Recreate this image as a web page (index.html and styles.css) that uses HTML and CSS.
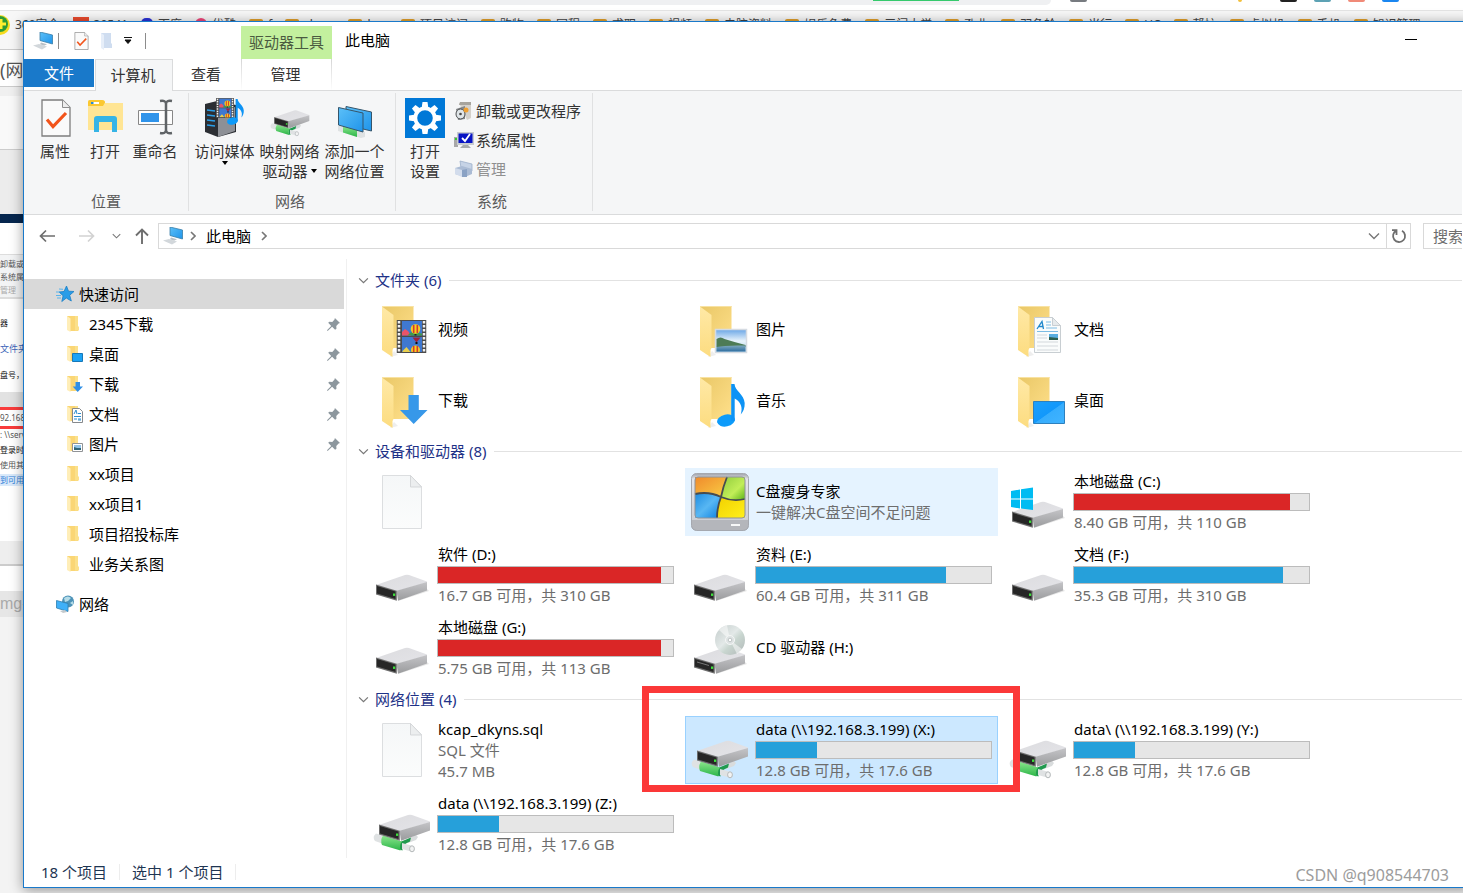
FILE: index.html
```html
<!DOCTYPE html>
<html lang="zh-CN">
<head>
<meta charset="utf-8">
<title>此电脑</title>
<link rel="stylesheet" href="styles.css">
</head>
<body>
<svg class="defs" aria-hidden="true">
  <defs>
    <linearGradient id="gBack" x1="0" y1="0" x2="1" y2="1"><stop offset="0" stop-color="#e9c766"/><stop offset="1" stop-color="#ffe08b"/></linearGradient>
    <linearGradient id="gFlap" x1="0" y1="0" x2="0" y2="1"><stop offset="0" stop-color="#ffe9a6"/><stop offset="1" stop-color="#fcdc80"/></linearGradient>
    <linearGradient id="gTop" x1="0" y1="0" x2="1" y2="1"><stop offset="0" stop-color="#dcdcdf"/><stop offset="1" stop-color="#e4e4e8"/></linearGradient>
    <linearGradient id="gSide" x1="0" y1="0" x2="0" y2="1"><stop offset="0" stop-color="#c4c4c7"/><stop offset="1" stop-color="#9a9b9d"/></linearGradient>
    <linearGradient id="gBlue" x1="0" y1="0" x2="1" y2="1"><stop offset="0" stop-color="#5cc0f8"/><stop offset="1" stop-color="#1f94ea"/></linearGradient>
    <linearGradient id="gDesk" x1="0" y1="0" x2="1" y2="1"><stop offset="0" stop-color="#1ba0fb"/><stop offset=".5" stop-color="#1298fb"/><stop offset=".52" stop-color="#36adfd"/><stop offset="1" stop-color="#41b4ff"/></linearGradient>
    <linearGradient id="gSky" x1="0" y1="0" x2="0" y2="1"><stop offset="0" stop-color="#6aa6e6"/><stop offset=".5" stop-color="#e8f3fb"/><stop offset="1" stop-color="#a9cfe8"/></linearGradient>
    <linearGradient id="gSea" x1="0" y1="0" x2="0" y2="1"><stop offset="0" stop-color="#7fa9bd"/><stop offset="1" stop-color="#2f6ea0"/></linearGradient>
    <linearGradient id="gPipe" x1="0" y1="0" x2="0" y2="1"><stop offset="0" stop-color="#8be68c"/><stop offset="1" stop-color="#2cb548"/></linearGradient>
    <linearGradient id="gDisc" x1="0" y1="0" x2="1" y2="1"><stop offset="0" stop-color="#c3cccb"/><stop offset=".45" stop-color="#e3e9e8"/><stop offset=".6" stop-color="#c9d6d0"/><stop offset="1" stop-color="#b0b7b7"/></linearGradient>
    <linearGradient id="gCase" x1="0" y1="0" x2="0" y2="1"><stop offset="0" stop-color="#9fa2aa"/><stop offset=".1" stop-color="#e3e4e9"/><stop offset=".8" stop-color="#cfd1d6"/><stop offset="1" stop-color="#8e9199"/></linearGradient>
    <linearGradient id="gOr" x1="0" y1="0" x2="1" y2="1"><stop offset="0" stop-color="#f08a2c"/><stop offset="1" stop-color="#f9cf45"/></linearGradient>
    <linearGradient id="gGr" x1="0" y1="0" x2="1" y2="1"><stop offset="0" stop-color="#8fcc3c"/><stop offset=".6" stop-color="#c2ee58"/><stop offset="1" stop-color="#5bb318"/></linearGradient>
    <linearGradient id="gBl" x1="0" y1="0" x2="1" y2="1"><stop offset="0" stop-color="#1d8be0"/><stop offset=".5" stop-color="#58b7f3"/><stop offset="1" stop-color="#0a7fe0"/></linearGradient>
    <linearGradient id="gYe" x1="0" y1="0" x2="1" y2="1"><stop offset="0" stop-color="#f1d000"/><stop offset="1" stop-color="#fff01a"/></linearGradient>
    <linearGradient id="gPage" x1="0" y1="0" x2="0" y2="1"><stop offset="0" stop-color="#f5f7f8"/><stop offset="1" stop-color="#fbfcfc"/></linearGradient>
  </defs>

  <symbol id="folder" viewBox="0 0 58 58">
    <path d="M17 56l8-2-4-4z" fill="#eee"/>
    <path d="M9 5h31.500v42H20z" fill="url(#gBack)"/>
    <path d="M9 5.500h31.500" stroke="#f8e2a2"/>
    <path d="M9 5.500L20.500 14v33l-1 2v7L9 49z" fill="url(#gFlap)"/>
  </symbol>
  <symbol id="drive" viewBox="0 0 58 58">
    <path d="M25 55l31-10-3-3z" fill="#e6e6e6"/>
    <path d="M3 39l29-10q2-.6 4 0l18 6.500v1L24 45z" fill="url(#gTop)"/>
    <path d="M23.500 44.700L54 36v8.500L25 54.700z" fill="url(#gSide)"/>
    <path d="M3 38.500l20.800 6.200v10L3 48.500z" fill="#6d6d6d"/>
    <path d="M4 40l18.500 5.500v7.500L4 47.500z" fill="#262626"/>
    <path d="M20 47.500h2.200v2.400H20z" fill="#3ee23c"/>
  </symbol>
  <symbol id="netdrive" viewBox="0 0 58 58">
    <path d="M34 44l9-4 2 2-2 3-8 3z" fill="#d9dcdd"/>
    <path d="M27 47l11-4.500-1 4-4 2q-4 2-3.500 7l-3-1z" fill="#209a4e"/>
    <path d="M3 38.500l7 2-1 8-7-2.500q-3-4 1-7.500z" fill="#dfe2e3"/>
    <path d="M29 48l11 3q3 3 0 6l-11-3z" fill="#dfe2e3"/>
    <ellipse cx="39" cy="53.800" rx="2.400" ry="3" fill="#f2f3f3" stroke="#b5b9ba"/>
    <path d="M10 40.500l19 6q-3 3-1.500 9L9 50Q7 45 10 40.500z" fill="url(#gPipe)"/>
    <g transform="translate(3 -9)">
      <path d="M3 39l29-10q2-.6 4 0l18 6.500v1L24 45z" fill="url(#gTop)"/>
      <path d="M23.500 44.700L54 36v8.500L25 54.700z" fill="url(#gSide)"/>
      <path d="M3 38.500l20.800 6.200v10L3 48.500z" fill="#6d6d6d"/>
      <path d="M4 40l18.500 5.500v7.500L4 47.500z" fill="#262626"/>
      <path d="M20 47.500h2.200v2.400H20z" fill="#3ee23c"/>
    </g>
  </symbol>
  <symbol id="blank" viewBox="0 0 58 58">
    <path d="M9.500 2.500h28l11 11v42h-39z" fill="url(#gPage)" stroke="#dcdee0"/>
    <path d="M37.500 2.500v11.500h11z" fill="#eceeef" stroke="#d5d7d9"/>
  </symbol>
  <symbol id="film" viewBox="0 0 30 33">
    <path d="M0 0h30v33H0z" fill="#4b4b4b"/>
    <path d="M2.500 1v32M27.500 1v32" stroke="#f0f0f0" stroke-width="2.500" stroke-dasharray="2.400 1.600"/>
    <path d="M5.500 1h20v14.500h-20zM5.500 17h20v15h-20z" fill="#3f78d0"/>
    <path d="M5.500 12l3-3 3 2 3 4.500h-9z" fill="#ea5468"/><path d="M11 15.500l3-3 11.500 1v2z" fill="#3f9a4a"/>
    <circle cx="19" cy="9" r="4.800" fill="#f4cf22"/><path d="M17.200 5v8M20.800 5v8" stroke="#d83a2a" stroke-width="1.600"/><path d="M18 14h2v1.500h-2z" fill="#222"/>
    <path d="M16 17.500h8l-4 5z" fill="#a22338"/><path d="M19 22h2v2h-2z" fill="#111"/>
    <circle cx="19" cy="30" r="4.500" fill="#f4cf22"/><path d="M17.200 26v6M20.800 26v6" stroke="#d83a2a" stroke-width="1.600"/>
    <path d="M6 31l4-4 4 5H6z" fill="#e9cf4d"/><path d="M5.500 32h20v1h-20z" fill="#4b4b4b"/>
  </symbol>
  <symbol id="note" viewBox="0 0 28 43">
    <ellipse cx="9" cy="36.500" rx="9" ry="6" transform="rotate(-12 9 36.500)" fill="#0d9bfa"/>
    <path d="M14.200 0h3.300c.5 7 9.500 10 10.200 19 .2 5-1.500 9-4 11.500 2-6 1-12-6-16V37h-3.500z" fill="#0d93f5"/>
  </symbol>
  <symbol id="pc" viewBox="0 0 20 18">
    <path d="M7 0l12.500 3v9L7 8.500z" fill="url(#gBlue)" stroke="#3a7fa8" stroke-width=".8"/>
    <path d="M8 10.500l6 1.800-3 1.500-4-1.500z" fill="#b9c0c6"/>
    <path d="M0 13.500l6-1.500 8 2.500-5 3z" fill="#d2d7db"/>
  </symbol>
  <symbol id="miniFolder" viewBox="0 0 18 18">
    <path d="M1 1h11v15H4z" fill="#fad675"/><path d="M9 1h3v10l1 1v3.500H9z" fill="#fbe08a"/>
    <path d="M1 1l3.500 2.500V17L1 15z" fill="#ffeeb8"/>
  </symbol>
  <symbol id="chev" viewBox="0 0 12 8"><path d="M1 1.500l5 5 5-5" fill="none" stroke="currentColor" stroke-width="1.400"/></symbol>
  <symbol id="pin" viewBox="0 0 14 14"><path d="M8.500 0L14 5.500l-1.500.5-2.500 2.500.2 3-1.500 1.200L5.500 9.500.7 14 0 13.300l4.500-4.800L1.300 5.200 2.500 4l3.200.2 2.400-2.600z" fill="#8d979e"/></symbol>
  <symbol id="checkpage" viewBox="0 0 30 38">
    <path d="M1 1h20.500L29 8.500V37H1z" fill="#fafafa" stroke="#7d7d7d" stroke-width="1.300"/><path d="M21.500 1v7.500H29" fill="#ededed" stroke="#8d8d8d"/>
    <path d="M6 20.500l6 7L25 14" fill="none" stroke="#f2541b" stroke-width="3.200"/>
  </symbol>
</svg>

<div class="browser">
  <div class="urlbar"><span class="pill"><i class="green"></i></span><i class="dot"></i><i class="dot y"></i><i class="dot k"></i><i class="dot t"></i><i class="dot r"></i><i class="dot b"></i></div>
  <div class="bookmarks">
    <svg class="b360" viewBox="0 0 20 20"><circle cx="10" cy="10" r="10" fill="#f5dc1e"/><circle cx="10" cy="9" r="8" fill="#2d9b35"/><path d="M11 4v10M6 9h10" stroke="#ffee2e" stroke-width="3"/></svg>
    <span class="first">360安全</span><i class="red"></i><span>30541</span><i class="paw"></i><span>百度</span><i class="pink"></i><span>优酷</span>
    <i class="fold"></i><span>f</span><i class="fold"></i><span>share</span><i class="fold"></i><span>hsp</span><i class="fold"></i><span>项目访问</span><i class="fold"></i><span>购物</span><i class="fold"></i><span>同程</span><i class="fold"></i><span>求职</span><i class="fold"></i><span>视频</span><i class="fold"></i><span>电脑资料</span><i class="fold"></i><span>娱乐免费</span><i class="fold"></i><span>三门大学</span><i class="fold"></i><span>孔业</span><i class="fold"></i><span>羽角轮</span><i class="fold"></i><span>当行</span><i class="fold"></i><span>UC</span><i class="fold"></i><span>帮忙</span><i class="fold"></i><span>虚拟机</span><i class="fold"></i><span>手机</span><i class="fold"></i><span>知识管理</span>
  </div>
  <div class="page">
    <div class="p-tab">(网</div>
    <div class="p-tool"></div>
    <div class="p-grey"></div>
    <div class="p-navy"></div>
    <div class="p-white"></div>
    <div class="p-rib"><span>卸载或更</span><span>系统属性</span><span class="dim">管理</span></div>
    <div class="p-text"><span class="bold">器</span><span class="link">文件夹</span><span class="bold">盘号，以</span></div>
    <div class="p-band"></div>
    <div class="p-red">92.168.3</div>
    <div class="p-list"><span>: \\serve</span><span class="bold">登录时重新</span><span>使用其他</span><span class="sky">到可用于</span></div>
    <div class="p-box"></div>
    <div class="p-gap"></div>
    <div class="p-img">mg-</div>
    <div class="p-rest"></div>
  </div>
</div>

<main class="window">
  <header class="titlebar">
    <div class="qat">
      <svg class="i-pc"><use href="#pc"/></svg><i class="bar"></i>
      <svg class="i-chk"><use href="#checkpage"/></svg>
      <svg class="i-ghost" viewBox="0 0 13 18"><path d="M1 1h10v10l1 1v4H1z" fill="#cfddf0"/><path d="M1 1l3 2v15l-3-2z" fill="#e6eef9"/></svg>
      <svg class="i-drop" viewBox="0 0 8 7"><path d="M0 .5h8M1 3h6L4 6.500z" stroke="#111" stroke-width="1" fill="#111"/></svg><i class="bar last"></i>
    </div>
    <div class="ctx">驱动器工具</div>
    <h1>此电脑</h1>
    <button class="min" aria-label="最小化"><i></i></button>
  </header>

  <nav class="tabs">
    <button class="file">文件</button><button class="active">计算机</button><button class="view">查看</button><button class="manage">管理</button>
  </nav>

  <section class="ribbon">
    <div class="group g1">
      <div class="tools">
        <button class="big"><svg viewBox="0 0 40 40"><use href="#checkpage" x="6" y="1" width="30" height="38"/></svg>属性</button>
        <button class="big"><svg viewBox="0 0 40 40"><path d="M3 4q0-2 2-2h12q3 0 3 3H38v27H3z" fill="#ffe594"/><path d="M3 8V4q0-2 2-2h12q3 0 3 2.500L18 8z" fill="#fbc831"/><path d="M6 4h8v2H6z" fill="#fff"/><path d="M6 4h2.500v2H6z" fill="#2a8bd6"/><path d="M9 34V21q0-3 3-3h17q3 0 3 3v13h-5V24H14v10z" fill="#35b4e6"/></svg>打开</button>
        <button class="big"><svg viewBox="0 0 40 40"><path d="M3.500 12.500h34v14h-34z" fill="#fdfdfd" stroke="#878787"/><path d="M6 15h18v9H6z" fill="#2e93ea"/><path d="M25 3q6-1 6 3 0-4 6-3M31 5v29M25 35q6 1 6-3 0 4 6 3" fill="none" stroke="#5f6366" stroke-width="2.500"/></svg>重命名</button>
      </div>
      <h2>位置</h2>
    </div>
    <div class="group g2">
      <div class="tools">
        <button class="big"><svg viewBox="0 0 40 40"><path d="M0 6l12-3 19 4v27l-18 5L0 34z" fill="#2b2e33"/><path d="M13 12l17-3v24l-17 6z" fill="#8d9096"/><path d="M2 12l8 1M2 17l8 1M2 22l8 1M2 27l8 1" stroke="#2b9fe8" stroke-width="1.300"/><use href="#film" x="11" y="0" width="18" height="20"/><use href="#note" x="22" y="1" width="17" height="26"/></svg>访问媒体<svg class="tri" viewBox="0 0 6 4"><path d="M0 0h6L3 4z"/></svg></button>
        <button class="big"><svg viewBox="0 2 58 58"><use href="#netdrive" x="0" y="0" width="58" height="58"/></svg>映射网络<span class="row">驱动器<svg class="tri" viewBox="0 0 6 4"><path d="M0 0h6L3 4z"/></svg></span></button>
        <button class="big"><svg viewBox="0 0 40 40"><path d="M3 28l4-1 23 7v5l-4 1L3 33z" fill="#dfe2e3"/><path d="M8 28l14 4v7L8 34.500z" fill="url(#gPipe)"/><path d="M11 8.500L36.500 14v19L11 27z" fill="url(#gBlue)" stroke="#35556b"/><path d="M3.500 9.500L28 15v19L3.500 27z" fill="url(#gBlue)" stroke="#35556b"/></svg>添加一个<br>网络位置</button>
      </div>
      <h2>网络</h2>
    </div>
    <div class="group g3">
      <div class="tools">
        <button class="big"><svg viewBox="0 0 40 40"><path d="M0 0h40v40H0z" fill="#0078d7"/><g fill="#fff"><path id="t" d="M17.500 4h5l1 7h-7z"/><use href="#t" transform="rotate(45 20 20)"/><use href="#t" transform="rotate(90 20 20)"/><use href="#t" transform="rotate(135 20 20)"/><use href="#t" transform="rotate(180 20 20)"/><use href="#t" transform="rotate(225 20 20)"/><use href="#t" transform="rotate(270 20 20)"/><use href="#t" transform="rotate(315 20 20)"/></g><circle cx="20" cy="20" r="9.700" fill="none" stroke="#fff" stroke-width="3.800"/></svg>打开<br>设置</button>
        <div class="small">
          <button><svg viewBox="0 0 20 20"><path d="M5 2l10-1 2 2v14l-4 2z" fill="#d4d1cb"/><path d="M6 1h11v3H5z" fill="#a7a49d"/><path d="M2 8l9-3v13l-7 1z" fill="#85888a"/><ellipse cx="6.500" cy="13" rx="4.500" ry="5" fill="#dfe5e8" stroke="#4d5052"/><circle cx="6.500" cy="13" r="1.300" fill="#444"/><circle cx="12" cy="9" r="2.500" fill="#f0a030"/></svg>卸载或更改程序</button>
          <button><svg viewBox="0 0 20 20"><path d="M0 7h4v10H0z" fill="#a8a8a8"/><path d="M1 8h2v2H1z" fill="#32c832"/><path d="M3 2h17v13H3z" fill="#c8ccd0"/><path d="M4.500 3.500h14v9.500h-14z" fill="#0814c4"/><path d="M8 8l3 3 5-7" fill="none" stroke="#fff" stroke-width="1.800"/><path d="M9 15h5l3 3H6z" fill="#a6aaad"/></svg>系统属性</button>
          <button disabled><svg viewBox="0 0 20 20"><path d="M6 2l12 3v7L7 9z" fill="#c6d3e6" stroke="#9db0ca" stroke-width=".8"/><path d="M1 9l7-2 10 3v5l-7 3-10-3z" fill="#aabbd4"/><path d="M1 9l7 2v7l-7-3z" fill="#d2dcec"/><path d="M8 11l5-1v8H8z" fill="#8aa2c4"/></svg>管理</button>
        </div>
      </div>
      <h2>系统</h2>
    </div>
  </section>

  <div class="address">
    <button class="back" aria-label="后退"><svg class="arr" viewBox="0 0 16 14"><path d="M7 1.500L1.500 7 7 12.500M1.500 7H16" fill="none" stroke="#6e6e6e" stroke-width="1.700"/></svg></button>
    <button class="fwd" aria-label="前进" disabled><svg class="arr" viewBox="0 0 16 14"><path d="M9 1.500L14.500 7 9 12.500M14.500 7H0" fill="none" stroke="#d2d2d2" stroke-width="1.700"/></svg></button>
    <button class="recent" aria-label="最近"><svg class="cv"><use href="#chev"/></svg></button>
    <button class="up" aria-label="上移"><svg class="upa" viewBox="0 0 14 16"><path d="M1 7.500L7 1.500l6 6M7 1.500V16" fill="none" stroke="#6e6e6e" stroke-width="1.900"/></svg></button>
    <div class="crumbs">
      <svg class="i-pc"><use href="#pc"/></svg><svg class="gt" viewBox="0 0 6 10"><path d="M1 1l4 4-4 4" fill="none" stroke="#777" stroke-width="1.600"/></svg>
      <a href="#here">此电脑</a><svg class="gt" viewBox="0 0 6 10"><path d="M1 1l4 4-4 4" fill="none" stroke="#777" stroke-width="1.600"/></svg>
      <svg class="cv end"><use href="#chev"/></svg>
      <button class="reload" aria-label="刷新"><svg viewBox="0 0 16 16"><path d="M5.500 2.600A6 6 0 1 0 11 2.800M5.500 7V2.200H1" fill="none" stroke="#6e6e6e" stroke-width="1.800"/></svg></button>
    </div>
    <input class="search" type="text" placeholder="搜索" aria-label="搜索">
  </div>

  <div class="body">
    <nav class="side">
      <a href="#q" class="root sel"><svg viewBox="0 0 18 18"><path d="M10.500 1l2 5.200 5.500.3-4.300 3.700 1.600 5.800-5-3-4.500 3.500 1.300-5.800L3 7l5-.5z" fill="#2a9de8" stroke="#1b7fc6" stroke-width=".8"/><path d="M3 4l4 .3M0 7h4M0 10.500h5M1 13h4" stroke="#5ab4ec"/></svg>快速访问</a>
      <a href="#1"><svg><use href="#miniFolder"/></svg>2345下载<svg class="pin"><use href="#pin"/></svg></a>
      <a href="#2"><svg viewBox="0 0 18 18"><use href="#miniFolder"/><path d="M6.500 8.500h10v8h-10z" fill="#1ba3f5" stroke="#1778b8"/></svg>桌面<svg class="pin"><use href="#pin"/></svg></a>
      <a href="#3"><svg viewBox="0 0 18 18"><use href="#miniFolder"/><path d="M9.500 7h4.500v4.500h3L11.700 17l-5-5.500h2.800z" fill="#2f8fe6"/></svg>下载<svg class="pin"><use href="#pin"/></svg></a>
      <a href="#4"><svg viewBox="0 0 18 18"><use href="#miniFolder"/><path d="M6.500 3.500h7l3 3v11h-10z" fill="#fff" stroke="#86898c"/><path d="M8 9l2-4 1 4M8 11.500h7M8 14h3M12 14h3M12 15h3M12 8.500h3" stroke="#2d8fd0" fill="none"/></svg>文档<svg class="pin"><use href="#pin"/></svg></a>
      <a href="#5"><svg viewBox="0 0 18 18"><use href="#miniFolder"/><path d="M6.500 8.500h10v8h-10z" fill="#fff" stroke="#909396"/><path d="M8 10h7v5H8z" fill="#8fc3ea"/><path d="M8 12l3 1 4 0v2H8z" fill="#2e6478"/></svg>图片<svg class="pin"><use href="#pin"/></svg></a>
      <a href="#6"><svg><use href="#miniFolder"/></svg>xx项目</a>
      <a href="#7"><svg><use href="#miniFolder"/></svg>xx项目1</a>
      <a href="#8"><svg><use href="#miniFolder"/></svg>项目招投标库</a>
      <a href="#9"><svg><use href="#miniFolder"/></svg>业务关系图</a>
      <a href="#n" class="root net"><svg viewBox="0 0 18 18"><circle cx="12" cy="6.500" r="6" fill="#4d93b8"/><path d="M8 3q4-3 7 0l-3 3-3 1zM14 8l3-2v4z" fill="#b5dce8"/><path d="M.5 5.500l11.500 3v8l-11.500-3.500z" fill="#3fb0f8" stroke="#2f7fb0" stroke-width=".8"/><path d="M4 16l5-1 2 2-4 1z" fill="#c4c9cc"/></svg>网络</a>
    </nav>

    <div class="content">
      <section>
        <h3><svg class="cv"><use href="#chev"/></svg>文件夹 (6)</h3>
        <ul class="grid folders">
          <li><svg viewBox="0 0 58 58"><use href="#folder"/><use href="#film" x="23.500" y="19" width="30" height="33"/></svg><div class="t"><b>视频</b></div></li>
          <li><svg viewBox="0 0 58 58"><use href="#folder"/><path d="M24.500 28.500h31v23h-31z" fill="url(#gSky)" stroke="#d5dbe2" stroke-width="1.500"/><path d="M25.500 38q4-3 8 0l10 3 11 3v2H25.500z" fill="#4d7b55"/><path d="M25.500 46q8-2 29-1.500v6h-29z" fill="url(#gSea)"/></svg><div class="t"><b>图片</b></div></li>
          <li><svg viewBox="0 0 58 58"><use href="#folder"/><path d="M25.500 16.500h18l8 8v27h-26z" fill="#fafcfc" stroke="#c8ced2"/><path d="M43.500 16.500v8h8z" fill="#e6eaec" stroke="#c8ced2"/><path d="M28 28l5-7.500 1.500 7.500M29.500 25.500h4.500" fill="none" stroke="#2088cc" stroke-width="1.300"/><path d="M37 21h5M37 24h5M37 27h11M28 30.500h21" stroke="#7cbce4"/><path d="M28 34h10M28 37h10M28 41h21M28 45h21M28 49h21" stroke="#d3d8dc"/><path d="M40 33h9v6h-9z" fill="#5aaee0"/><path d="M40 36l9 1v2h-9z" fill="#2c6050"/></svg><div class="t"><b>文档</b></div></li>
          <li><svg viewBox="0 0 58 58"><use href="#folder"/><path d="M35.500 23h10.300v15h8.700L40.700 52 27 38h8.500z" fill="#3798e9"/></svg><div class="t"><b>下载</b></div></li>
          <li><svg viewBox="0 0 58 58"><use href="#folder"/><use href="#note" x="26" y="12" width="28" height="43"/></svg><div class="t"><b>音乐</b></div></li>
          <li><svg viewBox="0 0 58 58"><use href="#folder"/><path d="M24.500 29.500h31v22h-31z" fill="url(#gDesk)" stroke="#2d80be"/></svg><div class="t"><b>桌面</b></div></li>
        </ul>
      </section>

      <section>
        <h3><svg class="cv"><use href="#chev"/></svg>设备和驱动器 (8)</h3>
        <ul class="grid">
          <li><svg><use href="#blank"/></svg></li>
          <li class="hover"><svg viewBox="0 0 58 58"><rect x=".5" y=".5" width="57" height="57" rx="5" fill="url(#gCase)" stroke="#a5a8af"/><path d="M1 47h56v5q0 5-5 5H6q-5 0-5-5z" fill="#b4b6bb"/><path d="M4 4h32q-4 10-6 20-12-6-26-3z" fill="url(#gOr)"/><path d="M36 4h18v22q-12 3-24-2 2-10 6-20z" fill="url(#gGr)"/><path d="M4 21q14-3 26 3-4 10-4 21H4z" fill="url(#gBl)"/><path d="M30 24q12 5 24 2v19H26q0-11 4-21z" fill="url(#gYe)"/><path d="M36 4q-4 10-6 20-4 10-4 21M4 21q14-3 26 3 12 5 24 2" fill="none" stroke="#474c50" stroke-width="1.800"/><rect x="4" y="4" width="50" height="41" rx="3" fill="none" stroke="#8e9298"/><path d="M40 52h9" stroke="#fff" stroke-width="1.800"/></svg><div class="t"><b>C盘瘦身专家</b><span>一键解决C盘空间不足问题</span></div></li>
          <li><svg viewBox="0 0 58 58"><use href="#drive"/><path d="M2 18l9-1.500v9H2zM12 16.200l12-1.700v11H12zM2 26.500h9v9L2 34zM12 26.500h12v10.500l-12-1.500z" fill="#00bcf2"/></svg><div class="t"><b>本地磁盘 (C:)</b><div class="meter"><i class="full" style="width:92%"></i></div><span>8.40 GB 可用，共 110 GB</span></div></li>
          <li><svg><use href="#drive"/></svg><div class="t"><b>软件 (D:)</b><div class="meter"><i class="full" style="width:95%"></i></div><span>16.7 GB 可用，共 310 GB</span></div></li>
          <li><svg><use href="#drive"/></svg><div class="t"><b>资料 (E:)</b><div class="meter"><i style="width:81%"></i></div><span>60.4 GB 可用，共 311 GB</span></div></li>
          <li><svg><use href="#drive"/></svg><div class="t"><b>文档 (F:)</b><div class="meter"><i style="width:89%"></i></div><span>35.3 GB 可用，共 310 GB</span></div></li>
          <li><svg><use href="#drive"/></svg><div class="t"><b>本地磁盘 (G:)</b><div class="meter"><i class="full" style="width:95%"></i></div><span>5.75 GB 可用，共 113 GB</span></div></li>
          <li><svg viewBox="0 0 58 58"><use href="#drive"/><path d="M6 43l12 3.500" stroke="#777"/><circle cx="39" cy="21" r="15" fill="url(#gDisc)"/><path d="M39 21L28 11q4-4 8-5zM39 21l12 9q-2 4-5 5z" fill="#fff" opacity=".5"/><circle cx="39" cy="21" r="4.500" fill="#dfe4e4" stroke="#f4f6f6"/><circle cx="39" cy="21" r="1.800" fill="#fff" stroke="#bfc5c5"/></svg><div class="t solo"><b>CD 驱动器 (H:)</b></div></li>
        </ul>
      </section>

      <section>
        <h3><svg class="cv"><use href="#chev"/></svg>网络位置 (4)</h3>
        <ul class="grid shares">
          <li><svg><use href="#blank"/></svg><div class="t"><b>kcap_dkyns.sql</b><span>SQL 文件</span><span>45.7 MB</span></div></li>
          <li class="picked"><svg><use href="#netdrive"/></svg><div class="t"><b>data (\\192.168.3.199) (X:)</b><div class="meter"><i style="width:26%"></i></div><span>12.8 GB 可用，共 17.6 GB</span></div><div class="mark"></div></li>
          <li><svg><use href="#netdrive"/></svg><div class="t"><b>data\ (\\192.168.3.199) (Y:)</b><div class="meter"><i style="width:26%"></i></div><span>12.8 GB 可用，共 17.6 GB</span></div></li>
          <li><svg><use href="#netdrive"/></svg><div class="t"><b>data (\\192.168.3.199) (Z:)</b><div class="meter"><i style="width:26%"></i></div><span>12.8 GB 可用，共 17.6 GB</span></div></li>
        </ul>
      </section>
    </div>
  </div>

  <footer class="status"><span>18 个项目</span><span>选中 1 个项目</span></footer>
</main>
<div class="watermark">CSDN @q908544703</div>
</body>
</html>
```
FILE: styles.css
```css
* { box-sizing: border-box; }
body {
  margin: 0;
  height: 100vh;
  overflow: hidden;
  position: relative;
  background: #f3f3f3;
  color: #000;
  font: 15px/20px "Noto Sans", "Noto Sans CJK SC", sans-serif;
}
h1, h2, h3, ul { margin: 0; padding: 0; font: inherit; list-style: none; }
b { font-weight: 400; }
button { font: inherit; color: inherit; background: none; border: 0; padding: 0; }
a { color: inherit; text-decoration: none; }
i { font-style: normal; }
svg { display: block; flex: none; }
.defs { position: absolute; width: 0; height: 0; }

/* browser behind the window */
.browser { height: 100%; display: flex; flex-direction: column; overflow: hidden; white-space: nowrap; }
.urlbar { display: flex; height: 10px; flex: none; background: #fff; }
.pill { width: 1051px; height: 5px; background: #eff0f2; border-radius: 0 0 6px 0; display: flex; justify-content: flex-end; padding-right: 92px; margin-right: 19px; }
.green { width: 86px; height: 1px; background: #35c96c; }
.dot { width: 17px; height: 2px; margin-right: 17px; border-radius: 0 0 4px 4px; background: #777b80; }
.dot.y { width: 4px; margin: 0 38px 0 134px; background: #f3c03c; }
.dot.k { background: #222; }
.dot.t { background: #5da2b4; }
.dot.r { background: #f08a78; }
.dot.b { background: #1a86f0; }
.bookmarks { display: flex; align-items: center; flex: none; height: 39px; padding-bottom: 10px; background: #f7f7f7; border-top: 1px solid #e4e4e4; font-size: 12px; line-height: 16px; color: #444; }
.bookmarks > * { flex: none; }
.bookmarks span { margin: 0 13px 0 5px; }
.b360 { width: 20px; height: 20px; margin-left: -10px; }
.bookmarks .red { width: 16px; height: 16px; background: #ea4a2d; }
.bookmarks .paw { width: 12px; height: 14px; border-radius: 5px; background: #2a32d8; }
.bookmarks .pink { width: 12px; height: 14px; border-radius: 6px; background: #f0457a; }
.bookmarks .fold { width: 14px; height: 13px; background: #f5c15a; border-top: 2px solid #e2a02a; border-radius: 2px; }
.page { flex: 1; display: flex; flex-direction: column; font-size: 8px; line-height: 12px; color: #555; }
.p-tab { height: 38px; padding-top: 9px; background: #fff; border: solid #ccc; border-width: 1px 0; font-size: 18px; line-height: 22px; color: #555; }
.p-tool { height: 63px; border-top: 9px solid #f0f0f0; background: #f9f9f9; border-bottom: 1px solid #ccc; }
.p-grey { height: 64px; background: #ececec; }
.p-navy { height: 9px; background: #06264e; }
.p-white { height: 31px; background: #fff; }
.p-rib { height: 45px; background: #f3f4f5; border: solid #ddd; border-width: 1px 0 2px; display: flex; flex-direction: column; padding-top: 3px; gap: 1px; }
.dim { color: #aaa; }
.bold { color: #111; }
.p-text { height: 93px; background: #fff; display: flex; flex-direction: column; padding-top: 18px; gap: 14px; }
.link { color: #3c64b8; font-size: 9px; }
.p-band { height: 15px; background: #e2e2e2; }
.p-red { height: 22px; border: solid #f93c3c; border-width: 3px 0; background: #fff; line-height: 15px; }
.p-list { height: 112px; background: #fff; display: flex; flex-direction: column; gap: 3px; }
.sky { color: #2f80d8; background: #d9e9fa; }
.p-box { height: 25px; background: #eee; border-bottom: 2px solid #ccc; }
.p-gap { height: 25px; background: #fff; }
.p-img { height: 26px; background: #e6e6e6; color: #aaa; font: 16px/26px "Liberation Sans", sans-serif; }
.p-rest { flex: 1; }

/* explorer window */
.window {
  position: absolute;
  inset: 21px -8px 5px 23px;
  padding-right: 8px;
  background: #fff;
  border: 1px solid #1979ca;
  box-shadow: 0 2px 12px rgba(0,0,0,.4);
  display: flex;
  flex-direction: column;
  overflow: hidden;
}
.titlebar { display: flex; height: 37px; flex: none; }
.qat { width: 217px; display: flex; align-items: center; padding-left: 9px; }
.i-pc { width: 20px; height: 18px; }
.i-chk { width: 15px; height: 18px; margin-left: 15px; }
.i-ghost { width: 13px; height: 18px; margin-left: 11px; }
.i-drop { width: 8px; height: 7px; margin-left: 11px; }
.bar { width: 1px; height: 16px; margin-left: 5px; background: #8c8c8c; }
.bar.last { margin-left: 13px; }
.ctx { width: 91px; margin-top: 4px; background: #c3f09e; color: #4a5a40; text-align: center; line-height: 33px; }
.titlebar h1 { padding-left: 13px; line-height: 37px; flex: 1; }
.min { width: 46px; margin-right: 28px; height: 35px; display: flex; align-items: center; justify-content: center; }
.min i { width: 12px; height: 1px; background: #000; }
.tabs { display: flex; height: 32px; flex: none; border-bottom: 1px solid #dadbdc; color: #333; }
.tabs button { height: 31px; padding: 0 2px 2px 0; }
.tabs .file { width: 70px; height: 28px; margin-right: 1px; padding: 0; background: #1979ca; color: #fff; }
.tabs .active { width: 78px; height: 32px; background: #f5f6f7; border: 1px solid #dadbdc; border-bottom: 0; }
.tabs .view { width: 68px; }
.tabs .manage { width: 91px; border: 1px solid; border-width: 0 1px; border-image: linear-gradient(#d4d4d4, #fff) 1; }

.ribbon { display: flex; flex: none; height: 124px; background: #f5f6f7; border-bottom: 1px solid #dadbdc; color: #333; }
.group { display: flex; flex-direction: column; justify-content: space-between; margin: 2px 0 3px; padding: 5px 6px 0; border-right: 1px solid #e0e1e2; }
.group h2 { text-align: center; color: #5a5a5a; height: 20px; }
.g1 { width: 165px; }
.g2 { width: 207px; padding: 5px 7px 0 3px; }
.g3 { width: 197px; padding-right: 10px; }
.tools { display: flex; }
.big { display: flex; flex-direction: column; align-items: center; width: 50px; white-space: nowrap; }
.big > svg { width: 40px; height: 40px; margin-bottom: 3px; }
.g2 .big { width: 65px; }
.g3 .big { width: 46px; }
.big svg.tri { width: 6px; height: 4px; margin: 0; }
.row { display: flex; align-items: center; gap: 3px; }
.small { display: flex; flex-direction: column; gap: 9px; padding: 3px 0 0 6px; }
.small button { display: flex; align-items: center; gap: 2px; white-space: nowrap; }
.small svg { width: 20px; height: 20px; }
.small button:disabled { color: #8f8f8f; }

.address { display: flex; align-items: center; flex: none; height: 44px; padding: 0 0 2px 15px; }
.address > button { display: flex; }
.address > .back { width: 40px; }
.address > .fwd { width: 33px; }
.address > .recent { width: 23px; }
.address > .up { width: 23px; }
.arr { width: 16px; height: 14px; }
.upa { width: 14px; height: 16px; }
.cv { width: 12px; height: 8px; color: #777; }
.recent .cv { width: 9px; height: 6px; }
.crumbs { flex: 1; height: 26px; border: 1px solid #d9d9d9; display: flex; align-items: center; padding-left: 4px; }
.crumbs .gt { width: 6px; height: 10px; margin: 0 10px 0 7px; }
.crumbs a + .gt { margin-left: 10px; }
.crumbs .end { margin-left: auto; margin-right: 6px; }
.reload { width: 24px; height: 24px; border-left: 1px solid #d9d9d9; display: flex; align-items: center; justify-content: center; }
.reload svg { width: 16px; height: 16px; }
.search { width: 39px; height: 26px; margin-left: 12px; padding: 0 0 0 9px; border: 1px solid #d9d9d9; border-right: 0; font: inherit; outline: 0; }
.search::placeholder { color: #6d6d6d; opacity: 1; }

.body { flex: 1; min-height: 0; display: flex; }
.side { width: 323px; padding: 20px 2px 0 0; border-right: 1px solid #f0f0f0; display: flex; flex-direction: column; flex: none; }
.side a { height: 30px; display: flex; align-items: center; gap: 5px; padding-left: 42px; }
.side a svg { width: 18px; height: 18px; }
.side .root { padding-left: 32px; }
.side .sel { background: #d9d9d9; }
.side .net { margin-top: 10px; }
.side a svg.pin { width: 13px; height: 13px; margin: 0 4px 0 auto; }
.content { flex: 1; min-width: 0; padding: 6px 0 0 11px; }
.content section + section { margin-top: 2px; }
.content h3 { height: 32px; padding-bottom: 2px; display: flex; align-items: center; gap: 8px; color: #1e3287; }
.content h3 .cv { width: 11px; height: 7px; margin-right: -2px; }
.content h3::after { content: ""; flex: 1; height: 1px; background: #e2e2e2; }
.content ul { margin-left: 9px; }
.grid { display: grid; grid-template-columns: repeat(auto-fill, 313px); gap: 5px; }
.grid li { position: relative; height: 68px; display: flex; align-items: center; padding-left: 6px; gap: 6px; white-space: nowrap; }
.grid.shares { row-gap: 6px; }
.folders li { height: 66px; }
.grid li > svg { width: 58px; height: 58px; }
.t { display: flex; flex-direction: column; line-height: 21px; }
.t b, .t span { padding-left: 1px; }
.t span { color: #6d6d6d; }
.folders .t, .solo { padding-bottom: 2px; }
.meter { width: 237px; height: 18px; margin: 1px 0; border: 1px solid #bcbcbc; background: #e6e6e6; display: flex; }
.meter i { background: #26a0da; }
.meter .full { background: #da2626; }
.hover { background: #e5f3ff; }
.grid .picked { background: #cce8ff; outline: 1px solid #99d1ff; outline-offset: -1px; }
.mark { position: absolute; inset: -30px -22px -8px -43px; border: 7px solid #fb3838; z-index: 2; }
.status { display: flex; align-items: center; flex: none; height: 29px; padding: 0 0 2px 17px; color: #1e3552; }
.status span { padding-right: 12px; margin-right: 12px; border-right: 1px solid #ededed; line-height: 16px; }
.watermark { position: absolute; right: 14px; bottom: 8px; color: #9c9c9c; font-size: 16px; }
```
